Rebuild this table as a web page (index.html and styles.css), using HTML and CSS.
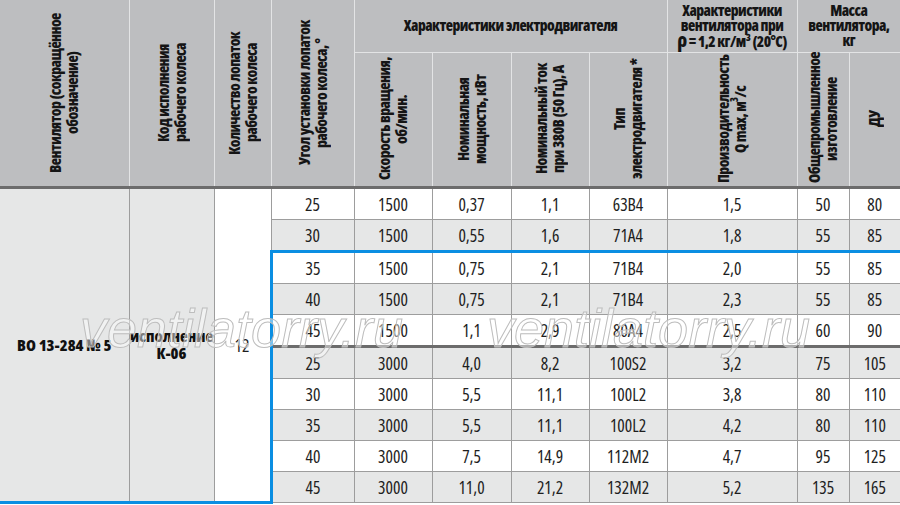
FILE: index.html
```html
<!DOCTYPE html>
<html lang="ru">
<head>
<meta charset="utf-8">
<title>ВО 13-284 № 5</title>
<link rel="stylesheet" href="styles.css">
</head>
<body>
<div class="sheet">
  <table class="spec">
    <colgroup>
      <col class="w129"><col class="w85"><col class="w57"><col class="w83">
      <col class="w78"><col class="w79"><col class="w78"><col class="w78">
      <col class="w130"><col class="w52"><col class="w51">
    </colgroup>
    <thead>
      <tr class="hr1">
        <th rowspan="2" class="first"><div class="vt tall">Вентилятор (сокращённое<br>обозначение)</div></th>
        <th rowspan="2"><div class="vt tall">Код исполнения<br>рабочего колеса</div></th>
        <th rowspan="2"><div class="vt tall">Количество лопаток<br>рабочего колеса</div></th>
        <th rowspan="2"><div class="vt tall">Угол установки лопаток<br>рабочего колеса, °</div></th>
        <th colspan="4" class="grp">Характеристики электродвигателя</th>
        <th class="grp">Характеристики<br>вентилятора при<br><span class="rho">ρ</span> = 1,2 кг/м³ (20°C)</th>
        <th colspan="2" class="grp last">Масса<br>вентилятора,<br>кг</th>
      </tr>
      <tr class="hr2">
        <th><div class="vt short">Скорость вращения,<br>об/мин.</div></th>
        <th><div class="vt short">Номинальная<br>мощность, кВт</div></th>
        <th><div class="vt short">Номинальный ток<br>при 380В (50 Гц), А</div></th>
        <th><div class="vt short">Тип<br>электродвигателя *</div></th>
        <th><div class="vt short">Производительность<br>Q max, м<sup>3</sup>/с</div></th>
        <th><div class="vt short">Общепромышленное<br>изготовление</div></th>
        <th class="last"><div class="vt short">ДУ</div></th>
      </tr>
    </thead>
    <tbody>
      <tr>
        <td rowspan="10" class="first fixed name">ВО 13-284 № 5</td>
        <td rowspan="10" class="fixed code">исполнение<br>К-06</td>
        <td rowspan="10" class="fixed count">12</td>
        <td>25</td><td>1500</td><td>0,37</td><td>1,1</td><td>63В4</td><td>1,5</td><td>50</td><td class="last">80</td>
      </tr>
      <tr class="alt">
        <td>30</td><td>1500</td><td>0,55</td><td>1,6</td><td>71А4</td><td>1,8</td><td>55</td><td class="last">85</td>
      </tr>
      <tr class="sel-top">
        <td class="sel-left">35</td><td>1500</td><td>0,75</td><td>2,1</td><td>71В4</td><td>2,0</td><td>55</td><td class="last">85</td>
      </tr>
      <tr class="alt">
        <td class="sel-left">40</td><td>1500</td><td>0,75</td><td>2,1</td><td>71В4</td><td>2,3</td><td>55</td><td class="last">85</td>
      </tr>
      <tr>
        <td class="sel-left">45</td><td>1500</td><td>1,1</td><td>2,9</td><td>80А4</td><td>2,5</td><td>60</td><td class="last">90</td>
      </tr>
      <tr class="alt split">
        <td class="sel-left">25</td><td>3000</td><td>4,0</td><td>8,2</td><td>100S2</td><td>3,2</td><td>75</td><td class="last">105</td>
      </tr>
      <tr>
        <td class="sel-left">30</td><td>3000</td><td>5,5</td><td>11,1</td><td>100L2</td><td>3,8</td><td>80</td><td class="last">110</td>
      </tr>
      <tr class="alt">
        <td class="sel-left">35</td><td>3000</td><td>5,5</td><td>11,1</td><td>100L2</td><td>4,2</td><td>80</td><td class="last">110</td>
      </tr>
      <tr>
        <td class="sel-left">40</td><td>3000</td><td>7,5</td><td>14,9</td><td>112М2</td><td>4,7</td><td>95</td><td class="last">125</td>
      </tr>
      <tr class="alt">
        <td class="sel-left">45</td><td>3000</td><td>11,0</td><td>21,2</td><td>132М2</td><td>5,2</td><td>135</td><td class="last">165</td>
      </tr>
    </tbody>
  </table>
  <span class="mark mark-a">ventilatorry.ru</span>
  <span class="mark mark-b">ventilatorry.ru</span>
</div>
</body>
</html>
```

FILE: styles.css
```css
html, body {
  margin: 0;
  padding: 0;
  background: #ffffff;
}
body {
  width: 900px;
  height: 505px;
  overflow: hidden;
  font-family: "Open Sans", "DejaVu Sans Condensed", sans-serif;
  font-stretch: 75%;
  color: #1b1b1b;
}
.sheet {
  position: relative;
  width: 900px;
}
.spec {
  width: 900px;
  table-layout: fixed;
  border-collapse: collapse;
}
.w129 { width: 129px; }
.w85 { width: 85px; }
.w57 { width: 57px; }
.w83 { width: 83px; }
.w78 { width: 78px; }
.w79 { width: 79px; }
.w130 { width: 130px; }
.w52 { width: 52px; }
.w51 { width: 51px; }

.spec th {
  background: #bdbec0;
  border: 1px solid #e3e4e5;
  border-top: none;
  padding: 0;
  font-weight: 800;
  font-size: 15px;
  line-height: 15px;
  letter-spacing: -0.55px;
  color: #151515;
  text-align: center;
  vertical-align: middle;
}
.spec thead tr.hr1 { height: 52px; }
.spec thead tr.hr2 { height: 135px; }
.spec thead th[rowspan],
.spec thead tr.hr2 th {
  border-bottom: 3px solid #6c6c6c;
}
.spec th.first, .spec td.first { border-left: none; }
.spec th.last, .spec td.last { border-right: none; }
.grp { white-space: nowrap; }
.rho { font-size: 19px; }

.vt {
  writing-mode: vertical-rl;
  transform: rotate(180deg);
  margin: 0 auto;
  width: fit-content;
  text-align: center;
  white-space: nowrap;
  line-height: 17px;
}
.vt.tall { height: 180px; }
.vt.short { height: 128px; }
.vt sup { font-size: 10px; line-height: 0; }

.spec td {
  border: 1px solid #9d9d9d;
  padding: 0;
  height: 30px;
  font-size: 17.5px;
  line-height: 20px;
  font-weight: 500;
  text-align: center;
  vertical-align: middle;
  background: #ffffff;
  color: #1e1e1e;
}
.spec tr.alt td { background: #e6e7e7; }
.spec td.fixed {
  border-bottom: 3px solid #0a8ee2;
}
.spec td.name {
  background: #e6e7e7;
  font-weight: 800;
  font-size: 16px;
  color: #111;
}
.spec td.code {
  background: #e6e7e7;
  font-weight: 800;
  font-size: 16px;
  line-height: 17px;
  color: #111;
}
.spec td.count { background: #ffffff; }
.spec tr.sel-top td { border-top: 3px solid #0a8ee2; }
.spec td.sel-left { border-left: 3px solid #0a8ee2; }
.spec tr.split td { border-top: 3px solid #6c6c6c; }
.spec tr.split td.sel-left { border-left: 3px solid #0a8ee2; }

.mark {
  position: absolute;
  top: 301px;
  font-family: "Liberation Sans", Arial, sans-serif;
  font-style: italic;
  font-stretch: normal;
  font-size: 54px;
  line-height: 54px;
  color: rgba(255, 255, 255, 0.45);
  -webkit-text-stroke: 1px #bdbdbd;
  white-space: nowrap;
  pointer-events: none;
}
.mark-a { left: 80px; }
.mark-b { left: 487px; }
```
